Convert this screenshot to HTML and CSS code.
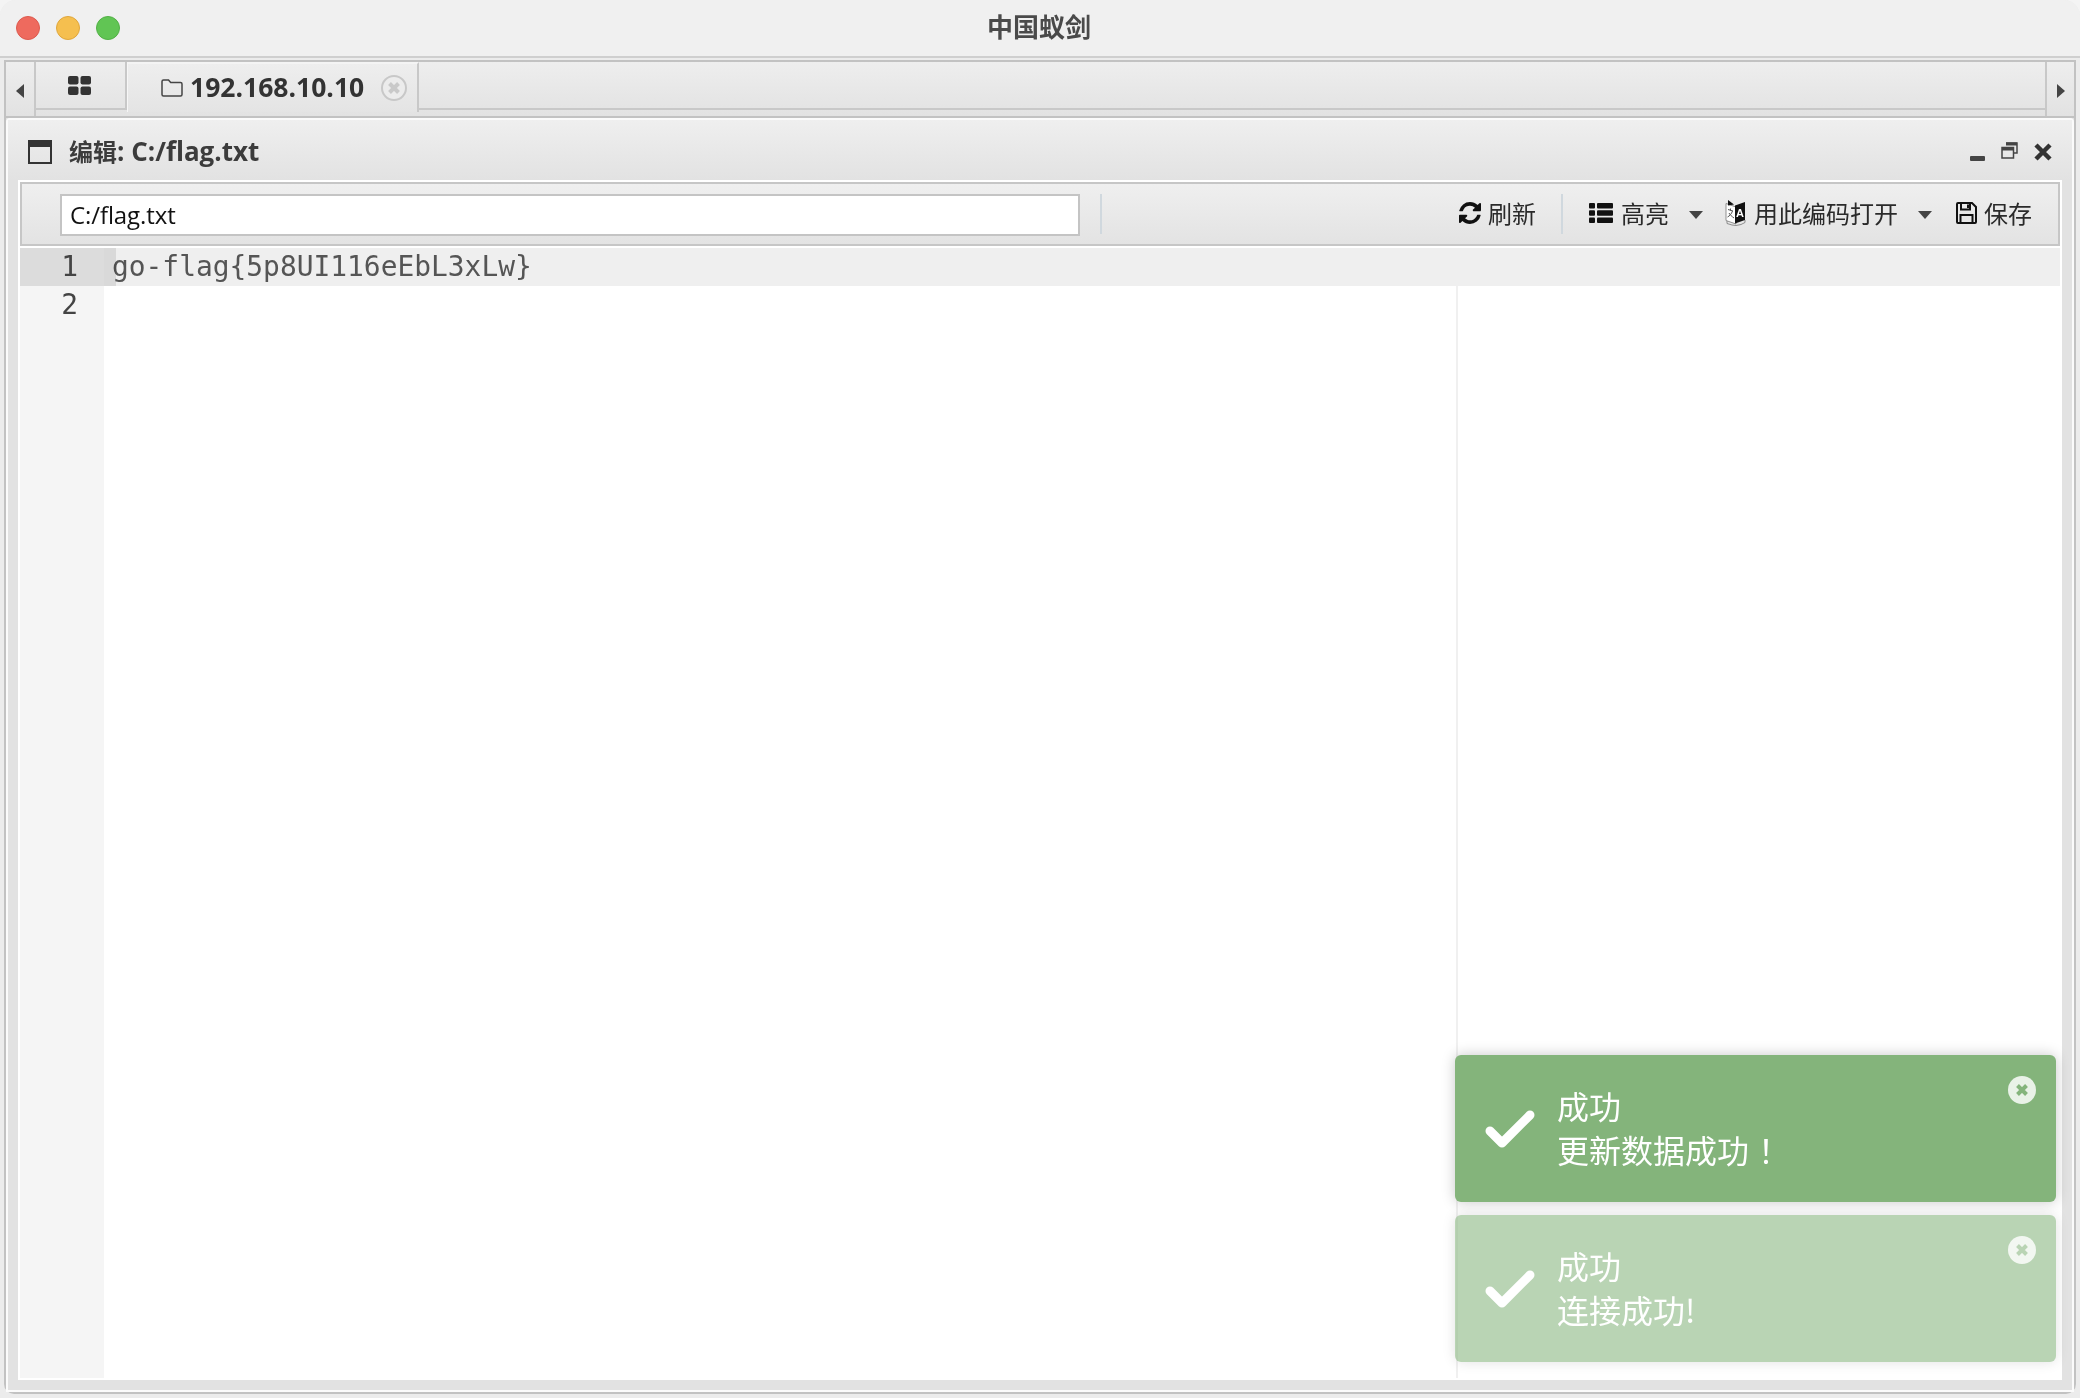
FILE: index.html
```html
<!DOCTYPE html>
<html lang="zh-CN">
<head>
<meta charset="utf-8">
<title>中国蚁剑</title>
<link rel="stylesheet" href="styles.css">
</head>
<body>
<div class="app">
  <header class="titlebar">
    <div class="lights"><span class="light red"></span><span class="light yellow"></span><span class="light green"></span></div>
    <div class="app-title">中国蚁剑</div>
  </header>
  <main class="main">
    <nav class="tabbar">
      <div class="scroll scroll-left"><span class="arrow arrow-left"></span></div>
      <div class="tabs">
        <div class="tab tab-grid">
          <svg class="grid-icon" viewBox="0 0 23 19"><rect x="0" y="0" width="10.500" height="8.500" rx="2"/><rect x="12.500" y="0" width="10.500" height="8.500" rx="2"/><rect x="0" y="10.500" width="10.500" height="8.500" rx="2"/><rect x="12.500" y="10.500" width="10.500" height="8.500" rx="2"/></svg>
        </div>
        <div class="tab tab-active">
          <svg class="folder-icon" viewBox="0 0 22 18"><path d="M2.500 1h5l2.200 2.600h9.800a1.500 1.500 0 0 1 1.500 1.500v10.400a1.500 1.500 0 0 1-1.500 1.500h-17A1.500 1.500 0 0 1 1 15.500v-13A1.500 1.500 0 0 1 2.500 1z"/></svg>
          <span class="tab-label">192.168.10.10</span>
          <span class="tab-close"><svg viewBox="0 0 26 26"><circle cx="13" cy="13" r="12"/><path d="M8.500 8.500l9 9M17.500 8.500l-9 9"/></svg></span>
        </div>
        <div class="tab-rest"></div>
      </div>
      <div class="scroll scroll-right"><span class="arrow arrow-right"></span></div>
    </nav>
    <section class="window">
      <div class="window-head">
        <svg class="win-icon" viewBox="0 0 24 24"><path d="M0 0h24v24H0zM2 7v15h20V7z" fill-rule="evenodd"/></svg>
        <div class="win-title"><span class="win-title-cjk">编辑</span>: C:/flag.txt</div>
        <div class="win-controls">
          <svg class="ctl ctl-min" viewBox="0 0 15 5"><rect width="15" height="5" rx="1"/></svg>
          <svg class="ctl ctl-restore" viewBox="0 0 17 17"><path d="M5 1h11v10h-3M1 5.500h11.500v10.500H1z"/><path class="thick" d="M5 2h11M1 7h11.500"/></svg>
          <svg class="ctl ctl-close" viewBox="0 0 20 20"><path d="M3 3l14 14M17 3L3 17"/></svg>
        </div>
      </div>
      <div class="window-body">
        <div class="toolbar">
          <div class="path-input">C:/flag.txt</div>
          <span class="tool-sep tool-sep-first"></span>
          <div class="tools">
            <div class="tool">
              <svg class="ico ico-refresh" viewBox="128 128 1536 1536"><path d="M1639 1056q0 5-1 7-64 268-268 434.500t-478 166.500q-146 0-282.500-55t-243.500-157l-129 129q-19 19-45 19t-45-19-19-45v-448q0-26 19-45t45-19h448q26 0 45 19t19 45-19 45l-137 137q71 66 161 102t187 36q134 0 250-65t186-179q11-17 53-117 8-23 30-23h192q13 0 22.500 9.500t9.500 22.500zm25-800v448q0 26-19 45t-45 19h-448q-26 0-45-19t-19-45 19-45l138-138q-148-137-349-137-134 0-250 65t-186 179q-11 17-53 117-8 23-30 23h-199q-13 0-22.500-9.500t-9.500-22.500v-7q65-268 270-434.500t480-166.500q146 0 284 55.500t245 156.500l130-129q19-19 45-19t45 19 19 45z"/></svg>
              <span>刷新</span>
            </div>
            <span class="tool-sep tool-sep-mid"></span>
            <div class="tool tool-list">
              <svg class="ico ico-list" viewBox="0 0 24 20"><rect x="0" y="0" width="6" height="5.500" rx="1"/><rect x="8" y="0" width="16" height="5.500" rx="1"/><rect x="0" y="7.250" width="6" height="5.500" rx="1"/><rect x="8" y="7.250" width="16" height="5.500" rx="1"/><rect x="0" y="14.500" width="6" height="5.500" rx="1"/><rect x="8" y="14.500" width="16" height="5.500" rx="1"/></svg>
              <span>高亮</span>
              <span class="caret"></span>
            </div>
            <div class="tool tool-enc">
              <svg class="ico ico-lang" viewBox="0 0 21 26">
                <path class="lang-page" d="M1 3.500l10 3.500v17l-10-3.500z"/>
                <path class="lang-page" d="M2 21v2.500l5 1.500 4 .5 5-1 4-2v-2.500"/>
                <path class="lang-black" d="M10 5.500l10-3.500v18l-10 3.500z"/>
                <path class="lang-black" d="M3 0l6 4.500-6 1z"/>
                <path class="lang-mark" d="M3 9.500l5 1.500M5.500 8.500v2M7.500 11c-1 3-3 5-5 6M4 13c1 2 3 3.500 5 5"/>
                <text class="lang-a" x="15" y="16.500">A</text>
              </svg>
              <span>用此编码打开</span>
              <span class="caret"></span>
            </div>
            <div class="tool tool-save">
              <svg class="ico ico-save" viewBox="0 0 21 22"><path d="M2 1h14l4 4v15a1 1 0 0 1-1 1H2a1 1 0 0 1-1-1V2a1 1 0 0 1 1-1z"/><path d="M5 1.500v6h9v-6M4.500 21v-8h12v8"/><path class="notch" d="M11 2.500h2v3.500h-2z"/></svg>
              <span>保存</span>
            </div>
          </div>
        </div>
        <div class="editor">
          <div class="gutter">
            <div class="num num-active">1</div>
            <div class="num">2</div>
          </div>
          <div class="code">
            <div class="code-line code-active"><span class="cursor-band"></span>go-flag{5p8UI116eEbL3xLw}</div>
            <div class="code-line"></div>
          </div>
          <div class="print-margin"></div>
        </div>
      </div>
      <div class="toasts">
        <div class="toast">
          <svg class="check" viewBox="0 0 50 38"><path d="M5 21l12 12L45 5"/></svg>
          <div class="toast-text"><div>成功</div><div>更新数据成功<span class="fw-punct">！</span></div></div>
          <span class="toast-close"><svg viewBox="0 0 28 28"><circle cx="14" cy="14" r="14"/><path d="M9.500 9.500l9 9M18.500 9.500l-9 9"/></svg></span>
        </div>
        <div class="toast toast-fading">
          <svg class="check" viewBox="0 0 50 38"><path d="M5 21l12 12L45 5"/></svg>
          <div class="toast-text"><div>成功</div><div>连接成功!</div></div>
          <span class="toast-close"><svg viewBox="0 0 28 28"><circle cx="14" cy="14" r="14"/><path d="M9.500 9.500l9 9M18.500 9.500l-9 9"/></svg></span>
        </div>
      </div>
    </section>
  </main>
</div>
</body>
</html>
```

FILE: styles.css
```css
* { box-sizing: border-box; }
html, body { margin: 0; padding: 0; height: 100%; }
body {
  background: #f4f4f4;
  font-family: "Open Sans", "Noto Sans CJK SC", sans-serif;
  color: #333;
  overflow: hidden;
}
.app {
  height: 1398px;
  display: flex;
  flex-direction: column;
  background: #ececec;
  border-radius: 16px 16px 0 0;
  overflow: hidden;
}
.titlebar {
  height: 58px;
  flex: none;
  background: #f0f0f0;
  border-bottom: 2px solid #cfcfcf;
  position: relative;
  display: flex;
  align-items: center;
  justify-content: center;
}
.lights {
  position: absolute;
  left: 16px;
  top: 16px;
  display: flex;
  gap: 16px;
}
.light { width: 24px; height: 24px; border-radius: 50%; border: 1px solid; }
.red { background: #ee6a5e; border-color: #dc5a4e; }
.yellow { background: #f5bf4f; border-color: #dfa63c; }
.green { background: #61c554; border-color: #52b046; }
.app-title {
  font: bold 26px/1 "Noto Sans CJK SC", sans-serif;
  color: #4a4a4a;
  margin: -4px 2px 0 0;
}
.main {
  flex: 1;
  min-height: 0;
  margin: 2px 4px 4px;
  border: 2px solid #c2c2c2;
  border-radius: 0 0 10px 10px;
  display: flex;
  flex-direction: column;
  background: #e2e2e2;
}
.tabbar {
  height: 56px;
  flex: none;
  display: flex;
  border-bottom: 2px solid #c2c2c2;
  background: linear-gradient(#eeeeee, #e2e2e2);
}
.scroll {
  flex: none;
  display: flex;
  align-items: center;
  justify-content: center;
}
.scroll-left { width: 30px; border-right: 2px solid #c8c8c8; padding-top: 4px; }
.scroll-right { width: 29px; border-left: 2px solid #c8c8c8; padding-top: 4px; }
.arrow { width: 0; height: 0; border-top: 7px solid transparent; border-bottom: 7px solid transparent; }
.arrow-left { border-right: 8px solid #444; }
.arrow-right { border-left: 8px solid #444; }
.tabs { flex: 1; display: flex; height: 48px; }
.tab {
  flex: none;
  display: flex;
  align-items: center;
  border-right: 2px solid #c8c8c8;
}
.tab-grid {
  width: 91px;
  justify-content: center;
  padding-right: 2px;
  border-bottom: 2px solid #c8c8c8;
}
.grid-icon { width: 23px; height: 19px; fill: #333; margin-bottom: -1px; }
.tab-active {
  width: 292px;
  padding-left: 33px;
  border-left: 1px solid #f6f6f6;
  border-top: 2px solid #f4f4f4;
  background: linear-gradient(#eeeeee, #e4e4e4);
  height: 50px;
}
.folder-icon { width: 22px; height: 18px; flex: none; fill: none; stroke: #444; stroke-width: 1.500; }
.tab-label {
  font: bold 26.500px/1 "Open Sans", sans-serif;
  color: #333;
  margin: -2px 0 0 7px;
}
.tab-close { width: 26px; height: 26px; flex: none; margin-left: 17px; }
.tab-close svg { display: block; width: 26px; height: 26px; fill: #ececec; stroke: #c8c8c8; stroke-width: 2; }
.tab-close path { stroke: #c9c9c9; stroke-width: 4; }
.tab-rest { flex: 1; border-bottom: 2px solid #c8c8c8; }
.window {
  flex: 1;
  min-height: 0;
  position: relative;
  display: flex;
  flex-direction: column;
  border: 2px solid #fbfbfb;
  border-radius: 4px 4px 0 0;
  padding: 0 10px 10px;
  background: #e2e2e2;
}
.window-head {
  height: 60px;
  flex: none;
  display: flex;
  align-items: center;
  margin: 0 -10px;
  padding: 4px 19px 0 20px;
  background: linear-gradient(#efefef, #e2e2e2);
}
.win-icon { width: 24px; height: 24px; fill: #333; flex: none; }
.win-title {
  margin: -2px 0 0 17px;
  font: bold 26px/1 "Open Sans", "Noto Sans CJK SC", sans-serif;
  color: #3c3c3c;
}
.win-title-cjk { font-size: 24px; }
.win-controls { margin-left: auto; display: flex; align-items: flex-start; gap: 15px; }
.win-controls .ctl-min { margin-right: 1px; }
.ctl { display: block; }
.ctl-min { width: 15px; height: 5px; fill: #444; margin-top: 14px; }
.ctl-restore { width: 17px; height: 17px; fill: none; stroke: #444; stroke-width: 1.500; }
.ctl-restore .thick { stroke-width: 3; }
.ctl-close { width: 20px; height: 20px; fill: none; stroke: #333; stroke-width: 4.500; }
.window-body {
  flex: 1;
  min-height: 0;
  display: flex;
  flex-direction: column;
  border: 2px solid #fff;
  background: #fff;
}
.toolbar {
  height: 64px;
  flex: none;
  display: flex;
  align-items: center;
  border: 2px solid #c6c6c6;
  background: linear-gradient(#efefef, #e3e3e3);
  padding-left: 38px;
  margin-bottom: 2px;
}
.path-input {
  width: 1020px;
  height: 42px;
  flex: none;
  margin-top: 2px;
  background: #fff;
  border: 2px solid #c4c4c4;
  padding-left: 8px;
  font: 24px/38px "Open Sans", sans-serif;
  letter-spacing: -.1px;
  color: #111;
}
.tool-sep { width: 2px; height: 40px; background: #d0d8de; flex: none; }
.tool-sep-first { margin-left: 20px; }
.tool-sep-mid { margin-left: 25px; }
.tools { margin-left: auto; display: flex; align-items: center; padding-right: 26px; }
.tool {
  display: flex;
  align-items: center;
  font: 24px/1 "Noto Sans CJK SC", sans-serif;
  color: #2a2a2a;
  margin-top: -2px;
}
.ico { display: block; flex: none; }
.ico-refresh { width: 22px; height: 22px; fill: #111; margin-right: 7px; }
.tool-list { margin-left: 26px; }
.ico-list { width: 24px; height: 20px; fill: #111; margin-right: 8px; }
.caret {
  width: 0; height: 0;
  border-left: 7.500px solid transparent;
  border-right: 7.500px solid transparent;
  border-top: 8px solid #444;
  margin: 4px 0 0 20px;
}
.tool-enc { margin-left: 22px; }
.ico-lang { width: 21px; height: 26px; margin-right: 8px; }
.lang-page { fill: #fff; stroke: #777; stroke-width: .8; }
.lang-page + .lang-page { fill: none; }
.lang-black { fill: #111; }
.lang-mark { fill: none; stroke: #555; stroke-width: 1; }
.lang-a { font: bold 11px/1 "Liberation Sans", sans-serif; fill: #fff; text-anchor: middle; }
.tool-save { margin-left: 24px; }
.ico-save { width: 21px; height: 22px; fill: none; stroke: #111; stroke-width: 2; margin-right: 7px; }
.notch { fill: #111; stroke: none; }
.editor {
  flex: 1;
  min-height: 0;
  display: flex;
  position: relative;
  background: #fff;
  font: 27.900px/38px "DejaVu Sans Mono", monospace;
}
.gutter { width: 84px; flex: none; background: #f5f5f5; }
.num { height: 38px; text-align: right; padding-right: 26px; color: #444; }
.num-active { background: #dcdcdc; }
.code { flex: 1; min-width: 0; }
.code-line { height: 38px; padding-left: 8px; color: #555; white-space: pre; position: relative; }
.code-active { background: #efefef; }
.cursor-band { position: absolute; left: 0; top: 0; width: 12px; height: 38px; background: #e8e8e8; mix-blend-mode: multiply; }
.print-margin { position: absolute; left: 1436px; top: 38px; bottom: 0; width: 2px; background: #f0f0f0; }
.toasts {
  position: absolute;
  left: 1447px;
  top: 935px;
  width: 601px;
  display: flex;
  flex-direction: column;
  gap: 13px;
}
.toast {
  height: 147px;
  border-radius: 6px;
  background: #84b47b;
  box-shadow: 0 0 14px rgba(0,0,0,.22);
  color: #fff;
  display: flex;
  align-items: center;
  position: relative;
  padding-left: 30px;
}
.toast-fading { opacity: .56; }
.check { width: 50px; height: 38px; flex: none; fill: none; stroke: #fff; stroke-width: 9; stroke-linecap: round; stroke-linejoin: round; }
.toast-text { margin: -3px 0 0 22px; font: 400 32px/44px "Noto Sans CJK SC", sans-serif; }
.fw-punct { font-family: "Noto Sans CJK TC", sans-serif; padding-left: 9px; }
.toast-close { position: absolute; right: 20px; top: 21px; width: 28px; height: 28px; }
.toast-close svg { display: block; width: 28px; height: 28px; fill: #fff; fill-opacity: .82; }
.toast-close path { stroke: #84b47b; stroke-width: 4; }
```
